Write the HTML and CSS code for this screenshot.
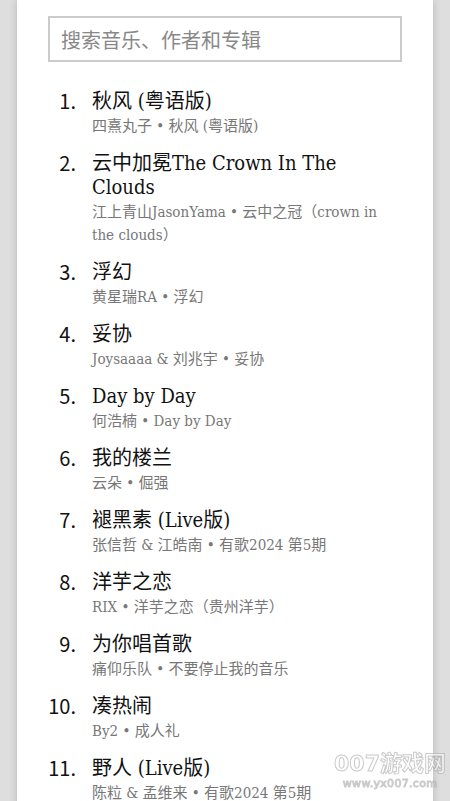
FILE: index.html
```html
<!DOCTYPE html>
<html lang="zh-CN">
<head>
    <meta charset="UTF-8">
    <meta name="viewport" content="width=device-width, initial-scale=1.0">
    <title>音乐搜索</title>
    <link rel="stylesheet" href="styles.css">
</head>
<body>
    <div class="container">
        <input type="text" class="search" placeholder="搜索音乐、作者和专辑">

        <ol class="songs">
            <li class="song">
                <span class="num">1.</span>
                <div class="info">
                    <div class="title">秋风 (粤语版)</div>
                    <div class="meta">四熹丸子 • 秋风 (粤语版)</div>
                </div>
            </li>
            <li class="song">
                <span class="num">2.</span>
                <div class="info">
                    <div class="title">云中加冕The Crown In The Clouds</div>
                    <div class="meta">江上青山JasonYama • 云中之冠（crown in the clouds）</div>
                </div>
            </li>
            <li class="song">
                <span class="num">3.</span>
                <div class="info">
                    <div class="title">浮幻</div>
                    <div class="meta">黄星瑞RA • 浮幻</div>
                </div>
            </li>
            <li class="song">
                <span class="num">4.</span>
                <div class="info">
                    <div class="title">妥协</div>
                    <div class="meta">Joysaaaa &amp; 刘兆宇 • 妥协</div>
                </div>
            </li>
            <li class="song">
                <span class="num">5.</span>
                <div class="info">
                    <div class="title">Day by Day</div>
                    <div class="meta">何浩楠 • Day by Day</div>
                </div>
            </li>
            <li class="song">
                <span class="num">6.</span>
                <div class="info">
                    <div class="title">我的楼兰</div>
                    <div class="meta">云朵 • 倔强</div>
                </div>
            </li>
            <li class="song">
                <span class="num">7.</span>
                <div class="info">
                    <div class="title">褪黑素 (Live版)</div>
                    <div class="meta">张信哲 &amp; 江皓南 • 有歌2024 第5期</div>
                </div>
            </li>
            <li class="song">
                <span class="num">8.</span>
                <div class="info">
                    <div class="title">洋芋之恋</div>
                    <div class="meta">RIX • 洋芋之恋（贵州洋芋）</div>
                </div>
            </li>
            <li class="song">
                <span class="num">9.</span>
                <div class="info">
                    <div class="title">为你唱首歌</div>
                    <div class="meta">痛仰乐队 • 不要停止我的音乐</div>
                </div>
            </li>
            <li class="song">
                <span class="num">10.</span>
                <div class="info">
                    <div class="title">凑热闹</div>
                    <div class="meta">By2 • 成人礼</div>
                </div>
            </li>
            <li class="song">
                <span class="num">11.</span>
                <div class="info">
                    <div class="title">野人 (Live版)</div>
                    <div class="meta">陈粒 &amp; 孟维来 • 有歌2024 第5期</div>
                </div>
            </li>
        </ol>
    </div>

    <div class="watermark">
        <div class="wm-name">007游戏网</div>
        <div class="wm-url">www.yx007.com</div>
    </div>
</body>
</html>
```

FILE: styles.css
```css
body {
    font-family: "DejaVu Serif Condensed", "DejaVu Serif", "Noto Sans CJK SC", serif;
    background-color: #dedede;
    margin: 0;
    padding: 0;
    color: #111;
}
.container {
    width: 416px;
    min-height: 100vh;
    margin: 0 auto;
    background: #fff;
    padding: 16px 31px 20px;
    box-sizing: border-box;
    box-shadow: 0 0 8px rgba(0, 0, 0, 0.18);
}
.search {
    display: block;
    width: 100%;
    height: 46px;
    box-sizing: border-box;
    border: 2px solid #ccc;
    padding: 0 11px;
    font-family: "Noto Sans CJK SC", sans-serif;
    font-size: 20px;
    color: #333;
    outline: none;
}
.search::placeholder {
    color: #888;
}
.songs {
    list-style: none;
    margin: 27px 0 0;
    padding: 0;
}
.song {
    display: grid;
    grid-template-columns: 28px 1fr;
    column-gap: 16px;
    margin-bottom: 13px;
}
.num {
    text-align: right;
    font-family: "Noto Sans CJK SC", sans-serif;
    font-size: 20px;
    line-height: 24px;
    white-space: nowrap;
}
.title {
    font-size: 20px;
    line-height: 24px;
}
.meta {
    font-size: 15px;
    line-height: 23px;
    margin-top: 2px;
    color: #777;
}
.watermark {
    position: fixed;
    right: 4px;
    bottom: 10px;
    text-align: center;
    font-family: "DejaVu Sans", "Noto Sans CJK SC", sans-serif;
    color: rgba(255, 255, 255, 0.6);
    -webkit-text-stroke: 1px rgba(150, 150, 150, 0.5);
}
.wm-name {
    font-size: 22px;
    line-height: 26px;
    font-weight: bold;
}
.wm-url {
    font-size: 11px;
    line-height: 14px;
    letter-spacing: 0.3px;
}
```
